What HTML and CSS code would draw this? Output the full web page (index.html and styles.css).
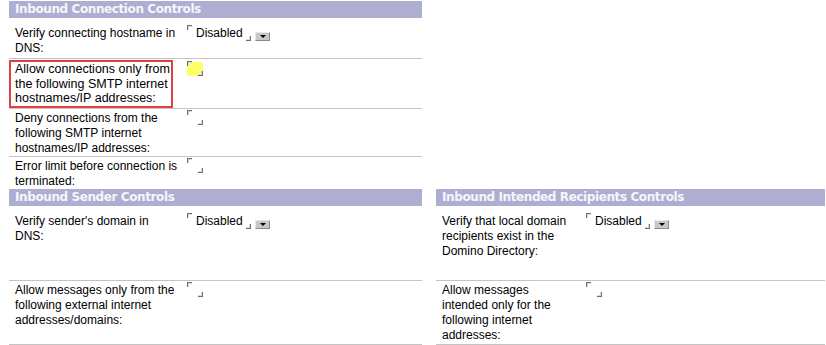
FILE: index.html
```html
<!DOCTYPE html>
<html lang="en">
<head>
  <meta charset="UTF-8" />
  <title>Inbound Controls</title>
  <link rel="stylesheet" href="styles.css">
</head>
<body>
  <div class="page">
    <div class="panel panel-left">
      <div class="section-title">Inbound Connection Controls</div>
      <div class="row row-first row-h1">
        <div class="label">Verify connecting hostname in<br>DNS:</div>
        <div class="value">
          <span class="field"><span class="tl"></span><span class="field-text">Disabled</span><span class="br"></span></span><span class="drop"></span>
        </div>
      </div>
      <div class="row row-h2">
        <div class="label"><div class="marked">Allow connections only from<br>the following SMTP internet<br>hostnames/IP addresses:</div></div>
        <div class="value value-marked">
          <span class="field field-empty field-focus"><span class="tl"></span><span class="br"></span></span>
        </div>
      </div>
      <div class="row row-h3">
        <div class="label">Deny connections from the<br>following SMTP internet<br>hostnames/IP addresses:</div>
        <div class="value">
          <span class="field field-empty"><span class="tl"></span><span class="br"></span></span>
        </div>
      </div>
      <div class="row row-last row-h4">
        <div class="label">Error limit before connection is<br>terminated:</div>
        <div class="value">
          <span class="field field-empty"><span class="tl"></span><span class="br"></span></span>
        </div>
      </div>
    </div>

    <div class="pair">
      <div class="panel panel-left">
        <div class="section-title">Inbound Sender Controls</div>
        <div class="row row-first row-h5">
          <div class="label">Verify sender's domain in<br>DNS:</div>
          <div class="value">
            <span class="field"><span class="tl"></span><span class="field-text">Disabled</span><span class="br"></span></span><span class="drop"></span>
          </div>
        </div>
        <div class="row row-h6">
          <div class="label">Allow messages only from the<br>following external internet<br>addresses/domains:</div>
          <div class="value">
            <span class="field field-empty"><span class="tl"></span><span class="br"></span></span>
          </div>
        </div>
      </div>

      <div class="panel panel-right">
        <div class="section-title">Inbound Intended Recipients Controls</div>
        <div class="row row-first row-h5">
          <div class="label">Verify that local domain<br>recipients exist in the<br>Domino Directory:</div>
          <div class="value">
            <span class="field"><span class="tl"></span><span class="field-text">Disabled</span><span class="br"></span></span><span class="drop"></span>
          </div>
        </div>
        <div class="row row-h6">
          <div class="label">Allow messages<br>intended only for the<br>following internet<br>addresses:</div>
          <div class="value">
            <span class="field field-empty"><span class="tl"></span><span class="br"></span></span>
          </div>
        </div>
      </div>
    </div>
  </div>
</body>
</html>
```

FILE: styles.css
```css
* {
  box-sizing: border-box;
  margin: 0;
  padding: 0;
}

body {
  font-family: "Liberation Sans", Arial, sans-serif;
  font-size: 12px;
  line-height: 15px;
  color: #000;
  background: #fff;
}

.page {
  padding: 1px 0 0 9px;
}

.panel-left {
  width: 413px;
}

.pair {
  display: grid;
  grid-template-columns: 413px 389px;
  gap: 14px;
}

.section-title {
  height: 17px;
  background: #aeaed2;
  color: #f6f6fb;
  font-family: "DejaVu Sans", Verdana, sans-serif;
  font-weight: bold;
  font-size: 12px;
  letter-spacing: -0.4px;
  line-height: 17px;
  padding-left: 6px;
  white-space: nowrap;
}

.row {
  display: grid;
  grid-template-columns: 178px 1fr;
  border-bottom: 1px solid #c4c4c4;
  padding-top: 2px;
}

.panel-right .row {
  grid-template-columns: 150px 1fr;
}

.row-first {
  padding-top: 8px;
}

.row-last {
  border-bottom: none;
}

.row-h1 { height: 41px; }
.row-h2 { height: 50px; padding-top: 1px; }
.row-h3 { height: 48px; }
.row-h4 { height: 32px; }
.row-h5 { height: 75px; }
.row-h6 { height: 64px; }

.label {
  padding-left: 6px;
  white-space: nowrap;
}

.marked {
  margin-left: -6px;
  width: 164px;
  height: 48px;
  border: 2px solid #e0403f;
  padding: 0 0 0 4px;
  font-size: 12.5px;
  line-height: 14.5px;
}

.value {
  display: flex;
  align-items: flex-start;
}

.value-marked {
  padding-top: 2px;
}

.field {
  display: inline-flex;
  align-items: flex-start;
  height: 15px;
}

.field-empty {
  width: 16px;
  height: 14px;
  justify-content: space-between;
}

.field-focus {
  background: #ffff66;
}

.tl,
.br {
  display: inline-block;
  width: 5px;
  height: 5px;
  flex: none;
}

.tl {
  border-left: 1px solid #707070;
  border-top: 1px solid #707070;
  box-shadow: inset 1px 1px 0 #d8d8d8;
  margin-top: -1px;
}

.br {
  align-self: flex-end;
  border-right: 1px solid #707070;
  border-bottom: 1px solid #707070;
  box-shadow: inset -1px -1px 0 #d8d8d8;
}

.field-text {
  padding: 0 3px 0 4px;
}

.drop {
  display: inline-block;
  position: relative;
  width: 15px;
  height: 9px;
  margin: 6px 0 0 4px;
  background: #c8c8c8;
  border: 1px solid #e8e8e8;
  border-right-color: #8a8a8a;
  border-bottom-color: #8a8a8a;
}

.drop::after {
  content: "";
  position: absolute;
  left: 4px;
  top: 2px;
  border-left: 3px solid transparent;
  border-right: 3px solid transparent;
  border-top: 3px solid #000;
}
```
